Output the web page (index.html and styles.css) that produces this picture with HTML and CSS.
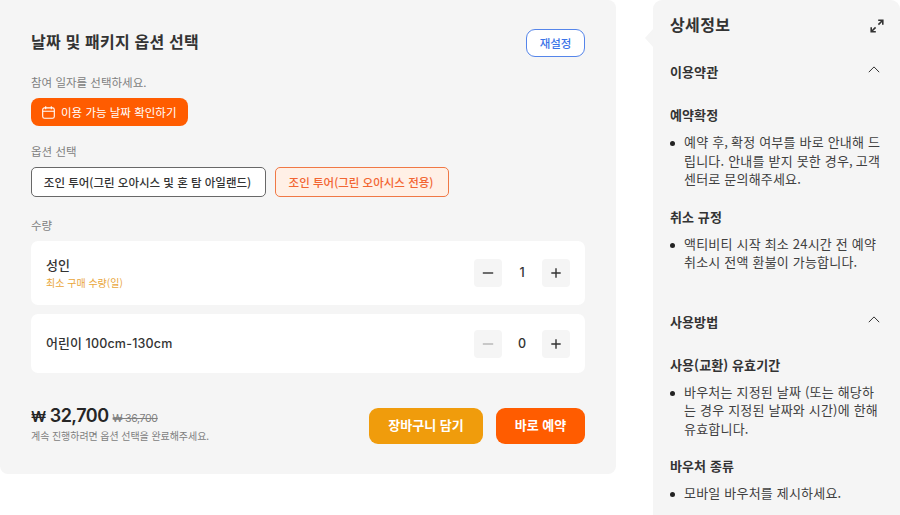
FILE: index.html
```html
<!DOCTYPE html>
<html lang="ko">
<head>
<meta charset="utf-8">
<title>날짜 및 패키지 옵션 선택</title>
<link rel="stylesheet" href="styles.css">
</head>
<body>
<div class="page">
  <main class="booking">
    <header class="booking-head">
      <h1 class="booking-title">날짜 및 패키지 옵션 선택</h1>
      <button class="reset">재설정</button>
    </header>
    <p class="label label-date">참여 일자를 선택하세요.</p>
    <button class="date-button">
      <svg class="calendar" viewBox="0 0 13 13"><rect x=".7" y="1.9" width="11.6" height="10.4" rx="1.8"/><path d="M.7 5.2h11.6M3.7.3v3M9.3.3v3"/></svg>
      <span class="date-text">이용 가능 날짜 확인하기</span>
    </button>
    <p class="label label-option">옵션 선택</p>
    <div class="options">
      <button class="option option-wide">조인 투어(그린 오아시스 및 혼 탐 아일랜드)</button>
      <button class="option option-selected">조인 투어(그린 오아시스 전용)</button>
    </div>
    <p class="label label-count">수량</p>
    <section class="ticket ticket-adult">
      <div class="ticket-info">
        <h2 class="ticket-name">성인</h2>
        <p class="ticket-note">최소 구매 수량(일)</p>
      </div>
      <div class="stepper">
        <button class="step"><svg class="sign" viewBox="0 0 12 12"><path d="M.8 6h10.4"/></svg></button>
        <span class="count">1</span>
        <button class="step"><svg class="sign" viewBox="0 0 12 12"><path d="M1.3 6h9.4M6 1.3v9.4"/></svg></button>
      </div>
    </section>
    <section class="ticket ticket-child">
      <h2 class="ticket-name">어린이 <span class="latin">100cm-130cm</span></h2>
      <div class="stepper">
        <button class="step step-off"><svg class="sign" viewBox="0 0 12 12"><path d="M.8 6h10.4"/></svg></button>
        <span class="count">0</span>
        <button class="step"><svg class="sign" viewBox="0 0 12 12"><path d="M1.3 6h9.4M6 1.3v9.4"/></svg></button>
      </div>
    </section>
    <footer class="summary">
      <div class="prices">
        <p class="price-line"><strong class="price"><span class="won">₩</span> 32,700</strong><s class="old-price">₩ 36,700</s></p>
        <p class="hint">계속 진행하려면 옵션 선택을 완료해주세요.</p>
      </div>
      <button class="action action-cart">장바구니 담기</button>
      <button class="action action-book">바로 예약</button>
    </footer>
  </main>
  <aside class="details">
    <header class="details-head">
      <h2 class="details-title">상세정보</h2>
      <svg class="expand" viewBox="0 0 14 14"><path d="M8.2 1.2h4.6v4.6M12.8 1.2L8.4 5.6M5.8 12.8H1.2V8.2M1.2 12.8l4.4-4.4"/></svg>
    </header>
    <section class="group">
      <header class="group-head"><h3 class="heading">이용약관</h3><svg class="chevron" viewBox="0 0 12 7"><path d="M.8 6.2L6 .9l5.2 5.3"/></svg></header>
      <h4 class="heading">예약확정</h4>
      <ul class="list"><li>예약 후<span class="comma">,</span> 확정 여부를 바로 안내해 드<br>립니다. 안내를 받지 못한 경우<span class="comma">,</span> 고객<br>센터로 문의해주세요.</li></ul>
      <h4 class="heading">취소 규정</h4>
      <ul class="list"><li>액티비티 시작 최소 24시간 전 예약<br>취소시 전액 환불이 가능합니다.</li></ul>
    </section>
    <section class="group group-usage">
      <header class="group-head"><h3 class="heading">사용방법</h3><svg class="chevron" viewBox="0 0 12 7"><path d="M.8 6.2L6 .9l5.2 5.3"/></svg></header>
      <h4 class="heading">사용(교환) 유효기간</h4>
      <ul class="list"><li>바우처는 지정된 날짜 (또는 해당하<br>는 경우 지정된 날짜와 시간)에 한해<br>유효합니다.</li></ul>
      <h4 class="heading">바우처 종류</h4>
      <ul class="list"><li>모바일 바우처를 제시하세요.</li></ul>
    </section>
  </aside>
</div>
</body>
</html>
```
FILE: styles.css
```css
* { box-sizing: border-box; margin: 0; padding: 0; }
body {
  width: 900px; height: 515px; overflow: hidden; background: #fff; color: #333;
  font-family: "Noto Sans CJK KR", sans-serif; font-size: 13px; white-space: nowrap;
}
button { border: 0; font: inherit; color: inherit; letter-spacing: inherit; white-space: nowrap; }
ul { list-style: none; }
svg { display: block; flex: none; fill: none; stroke: currentColor; }

.page { display: flex; justify-content: space-between; align-items: flex-start; height: 515px; }

.booking { width: 616px; height: 474px; padding: 29px 31px 0; background: #f5f5f5; border-radius: 0 8px 8px 8px; }
.booking-head { display: flex; justify-content: space-between; height: 28px; }
.booking-title { font-size: 16px; font-weight: 700; line-height: 25px; letter-spacing: .2px; }
.reset { width: 59px; background: #fff; border: 1px solid #5585ea; border-radius: 9px; color: #3b73e8; font-size: 11.5px; font-weight: 500; line-height: 24px; }

.label { height: 16px; color: #808080; font-size: 11.5px; font-weight: 400; line-height: 16px; }
.label-date { margin-top: 17px; }
.date-button { display: flex; align-items: center; gap: 6px; width: 157px; height: 28px; margin-top: 8px; padding-left: 11px; background: #ff5c00; border-radius: 8px; color: #fff; font-size: 11.5px; }
.calendar { width: 13px; height: 13px; stroke-width: 1.1; }
.date-text { line-height: 26px; }
.label-option { margin-top: 17px; }
.options { display: flex; gap: 9px; margin-top: 8px; }
.option { width: 174px; height: 30px; padding-right: 2px; background: #fff0e6; border: 1px solid #f07845; border-radius: 5px; font-size: 11.5px; font-weight: 500; line-height: 25px; }
.option-wide { width: 235px; background: #fff; border-color: #686868; }
.option-selected { color: #f26532; }
.label-count { margin-top: 20px; }

.ticket { display: flex; align-items: center; justify-content: space-between; width: 554px; padding: 0 15px; background: #fff; border-radius: 7px; }
.ticket-adult { height: 64px; margin-top: 8px; }
.ticket-child { height: 59px; margin-top: 9px; }
.ticket-name { font-size: 13px; font-weight: 500; line-height: 20px; }
.ticket-note { color: #e9a63a; font-size: 10px; line-height: 16px; }
.latin { font-family: Inter, sans-serif; font-size: 12.5px; font-weight: 500; letter-spacing: .2px; }
.stepper { display: flex; align-items: center; }
.step { display: flex; align-items: center; justify-content: center; width: 28px; height: 28px; background: #f5f5f5; border-radius: 4px; }
.step-off { color: #b5b5b5; }
.sign { width: 12px; height: 12px; stroke-width: 1.4; }
.count { width: 40px; text-align: center; font: 500 12.5px/20px Inter, sans-serif; }

.summary { display: flex; margin-top: 34px; }
.prices { flex: 1; }
.price-line { display: flex; align-items: baseline; gap: 4px; height: 21px; line-height: 18px; }
.price { color: #262626; font-family: Inter, "Noto Sans CJK KR", sans-serif; font-size: 18px; font-weight: 600; letter-spacing: -.5px; }
.won { font-size: 15px; }
.old-price { color: #808080; font-family: Inter, "Noto Sans CJK KR", sans-serif; font-size: 10.5px; letter-spacing: -.3px; }
.hint { color: #808080; font-size: 10px; line-height: 16px; letter-spacing: -.07px; }
.action { height: 36px; margin-top: 1px; border-radius: 9px; color: #fff; font-size: 13px; font-weight: 700; line-height: 32px; padding-bottom: 2px; }
.action-cart { width: 114px; background: #f09c0c; }
.action-book { width: 89px; margin-left: 13px; background: #ff5c00; }

.details { position: relative; width: 247px; height: 515px; padding: 14px 16px 0 17px; background: #f5f5f5; border-radius: 9px 9px 0 0; }
.details::before { content: ""; position: absolute; left: -8px; top: 29px; border: 9px solid transparent; border-left: 0; border-right: 8px solid #f5f5f5; }
.details-head { display: flex; justify-content: space-between; height: 22px; }
.details-title { font-size: 16px; font-weight: 700; line-height: 20px; letter-spacing: .4px; }
.expand { width: 14px; height: 14px; margin-top: 5px; stroke-width: 1.6; }
.group { padding-top: 26px; }
.group-usage { padding-top: 22px; }
.group-head { display: flex; justify-content: space-between; margin-bottom: 23px; }
.chevron { width: 12px; height: 7px; margin: 4px 4px 0 0; stroke-width: 1; }
.heading { height: 20px; font-size: 13px; font-weight: 700; line-height: 19px; letter-spacing: .1px; }
.list { margin: 8px 0 18px; }
.list li { position: relative; padding-left: 14px; color: #404040; line-height: 18.5px; letter-spacing: .2px; }
.list li::before { content: ""; position: absolute; left: 0; top: 8px; width: 5px; height: 5px; border-radius: 50%; background: #222; }
.comma { letter-spacing: -.8px; }
```
